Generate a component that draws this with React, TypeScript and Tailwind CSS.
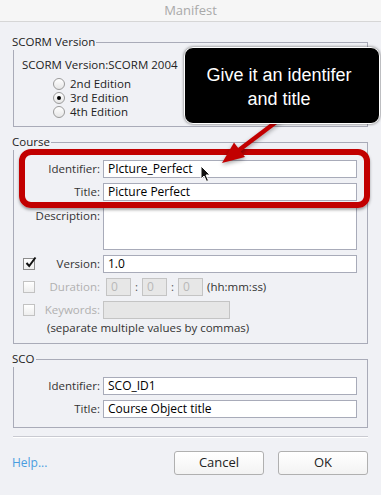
import type { ReactNode } from "react";

function Group({ title, className, children }: { title: string; className: string; children: ReactNode }) {
  return (
    <fieldset className={`border border-[#a9abb8] min-w-0 ${className}`}>
      <legend className="-ml-[2px] text-[11.5px] leading-[16px] text-[#222] pr-[1px]">{title}</legend>
      {children}
    </fieldset>
  );
}

function Field({ value }: { value: string }) {
  return (
    <div className="w-[254px] h-[18px] border border-[#a8abb9] bg-white px-[4px] flex items-center text-[12px] text-black">
      {value}
    </div>
  );
}

function Row({ label, value, disabled }: { label: string; value: string; disabled?: boolean }) {
  return (
    <div className="flex items-center gap-[3px]">
      <div className={`w-[86px] text-right ${disabled ? "text-[#b0b0b0]" : "text-[#333]"}`}>{label}</div>
      <Field value={value} />
    </div>
  );
}

function Radio({ checked, label }: { checked?: boolean; label: string }) {
  return (
    <div className="flex items-center h-[14px] gap-[5px]">
      <div className="w-[12px] h-[12px] rounded-full border border-[#9a9a9a] bg-gradient-to-b from-white to-[#e6e6e6] flex items-center justify-center">
        {checked && <div className="w-[4px] h-[4px] rounded-full bg-black" />}
      </div>
      <span>{label}</span>
    </div>
  );
}

function Check({ checked }: { checked?: boolean }) {
  return (
    <div
      className={`relative w-[12px] h-[12px] border bg-gradient-to-b from-white to-[#eeeeee] ${
        checked ? "border-[#8c8c8c]" : "border-[#c2c2c2]"
      }`}
    >
      {checked && (
        <svg className="absolute left-[0px] -top-[3px]" width="13" height="13" viewBox="0 0 13 13">
          <path d="M2.5 7 L5.2 10 L11.5 1.5" fill="none" stroke="#111" strokeWidth="2" />
        </svg>
      )}
    </div>
  );
}

function TimeBox() {
  return (
    <div className="w-[25px] h-[18px] border border-[#c4c4c4] bg-[#e7e7e7] px-[4px] flex items-center text-[12px] text-[#b8b8b8]">
      0
    </div>
  );
}

export default function App() {
  return (
    <div className="relative w-[381px] h-[495px] overflow-hidden bg-[#f0f1f5] text-[#222] text-[11.5px] font-['Open_Sans',sans-serif]">
      <div className="h-[22px] flex items-center justify-center bg-[#f6f6f6] border-b border-[#d6d6d6] text-[13px] text-[#a9a9a9]">
        Manifest
      </div>

      <div className="px-[13px]">
        <Group title="SCORM Version" className="mt-[12px] pt-[7px] pb-[7px]">
          <div className="pl-[8px] leading-[16px]">SCORM Version:SCORM 2004</div>
          <div className="mt-[4px] pl-[39px] flex flex-col">
            <Radio label="2nd Edition" />
            <Radio label="3rd Edition" checked />
            <Radio label="4th Edition" />
          </div>
        </Group>

        <Group title="Course" className="mt-[7px] pt-[10px] pb-[7px]">
          <div className="flex flex-col">
            <Row label="Identifier:" value="PIcture_Perfect" />
            <div className="mt-[5px]">
              <Row label="Title:" value="Picture Perfect" />
            </div>
            <div className="mt-[6px] flex items-start gap-[3px]">
              <div className="w-[86px] text-right text-[#333] leading-[16px] pt-[1px]">Description:</div>
              <div className="w-[254px] h-[43px] border border-[#a8abb9] bg-white" />
            </div>
            <div className="mt-[5px] flex items-center gap-[3px]">
              <div className="w-[86px] flex items-center pl-[9px]">
                <Check checked />
                <span className="flex-1 text-right text-[#333]">Version:</span>
              </div>
              <Field value="1.0" />
            </div>
            <div className="mt-[5px] flex items-center gap-[3px]">
              <div className="w-[86px] flex items-center pl-[9px]">
                <Check />
                <span className="flex-1 text-right text-[#b0b0b0]">Duration:</span>
              </div>
              <div className="ml-[3px] flex items-center gap-[4px]">
                <TimeBox />
                <span className="text-[#555]">:</span>
                <TimeBox />
                <span className="text-[#555]">:</span>
                <TimeBox />
                <span className="text-[#333]">(hh:mm:ss)</span>
              </div>
            </div>
            <div className="mt-[5px] flex items-center gap-[3px]">
              <div className="w-[86px] flex items-center pl-[9px]">
                <Check />
                <span className="flex-1 text-right text-[#b0b0b0]">Keywords:</span>
              </div>
              <div className="w-[127px] h-[18px] border border-[#c4c4c4] bg-[#e6e6e6]" />
            </div>
            <div className="mt-[1px] pl-[33px] leading-[16px] text-[#333]">(separate multiple values by commas)</div>
          </div>
        </Group>

        <Group title="SCO" className="mt-[7px] pt-[10px] pb-[9px]">
          <div className="flex flex-col gap-[5px]">
            <Row label="Identifier:" value="SCO_ID1" />
            <Row label="Title:" value="Course Object title" />
          </div>
        </Group>

        <div className="mt-[8px] h-[2px] border-t border-[#c9cad1] bg-white" />

        <div className="mt-[13px] flex items-center">
          <span className="flex-1 -ml-[1px] text-[12px] text-[#4a9de0]">Help...</span>
          <div className="flex gap-[14px]">
            <button className="w-[90px] h-[24px] border border-[#b0b0b0] rounded-[3px] bg-gradient-to-b from-white to-[#f3f3f3] text-[13px] text-[#222]">
              Cancel
            </button>
            <button className="w-[90px] h-[24px] border border-[#b0b0b0] rounded-[3px] bg-gradient-to-b from-white to-[#f3f3f3] text-[13px] text-[#222]">
              OK
            </button>
          </div>
        </div>
      </div>

      {/* annotation overlays */}
      <div className="absolute left-[19px] top-[149px] w-[351px] h-[59px] border-[6px] border-[#c20000] rounded-[12px] shadow-[0_2px_3px_rgba(0,0,0,0.35)]" />

      <svg
        className="absolute left-0 top-0 drop-shadow-[0_2px_2px_rgba(0,0,0,0.35)]"
        width="381"
        height="495"
        viewBox="0 0 381 495"
      >
        <line x1="284" y1="116" x2="239" y2="150" stroke="#c20000" strokeWidth="4.5" />
        <polygon points="222,163 234,142.6 245,157" fill="#c20000" />
      </svg>

      <svg className="absolute left-[200px] top-[165px]" width="12" height="18" viewBox="0 0 12 18">
        <path d="M1 1 L1 14 L4 11 L6.5 16.5 L8.5 15.5 L6 10 L10 10 Z" fill="#111" stroke="#fff" strokeWidth="1" />
      </svg>

      <div className="absolute left-[184px] top-[47px] w-[196px] h-[77px] rounded-[9px] bg-black border-[1.5px] border-white shadow-[0_0_3px_rgba(0,0,0,0.6)] flex flex-col items-center justify-center pt-[3px] pr-[6px] text-white text-[18px] leading-[24px] font-['Liberation_Sans',sans-serif]">
        <span>Give it an identifer</span>
        <span>and title</span>
      </div>
    </div>
  );
}
